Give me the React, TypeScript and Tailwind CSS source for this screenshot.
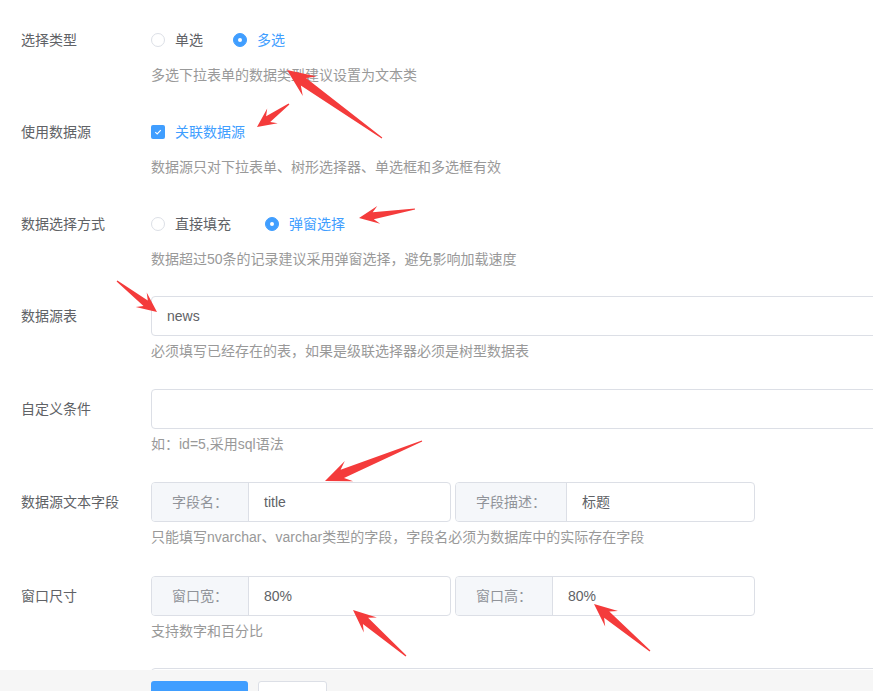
import React from "react";

const FONT = '"Liberation Sans", "Noto Sans CJK SC", sans-serif';

function Radio({ label, checked, className = "" }: { label: string; checked?: boolean; className?: string }) {
  return (
    <span className={`flex items-center ${className}`}>
      {checked ? (
        <span className="w-[14px] h-[14px] rounded-full bg-[#409eff] border border-[#409eff] flex items-center justify-center">
          <span className="w-[4px] h-[4px] rounded-full bg-white" />
        </span>
      ) : (
        <span className="w-[14px] h-[14px] rounded-full bg-white border border-[#dcdfe6]" />
      )}
      <span className={`ml-[10px] ${checked ? "text-[#409eff]" : "text-[#606266]"}`}>{label}</span>
    </span>
  );
}

function Checkbox({ label }: { label: string }) {
  return (
    <span className="flex items-center">
      <span className="w-[14px] h-[14px] rounded-[2px] bg-[#409eff] flex items-center justify-center">
        <svg width="10" height="10" viewBox="0 0 10 10">
          <path d="M2.3 5.1 L4.2 7 L7.8 3.2" fill="none" stroke="white" strokeWidth="1.1" />
        </svg>
      </span>
      <span className="ml-[10px] text-[#409eff]">{label}</span>
    </span>
  );
}

function TextInput({ value }: { value: string }) {
  return (
    <div className="w-[760px] h-[40px] border border-[#dcdfe6] rounded-[4px] bg-white flex items-center px-[15px] text-[#606266]">
      {value}
    </div>
  );
}

function Group({ prepend, value }: { prepend: string; value: string }) {
  return (
    <div className="w-[300px] h-[40px] flex border border-[#dcdfe6] rounded-[4px] overflow-hidden bg-white">
      <div className="h-full flex items-center px-[20px] bg-[#f5f7fa] border-r border-[#dcdfe6] text-[#909399]">
        {prepend}
      </div>
      <div className="flex-1 flex items-center px-[15px] text-[#606266]">{value}</div>
    </div>
  );
}

function Item({ label, help, children, mb }: { label: string; help?: string; children: React.ReactNode; mb: string }) {
  return (
    <div className={`flex ${mb}`}>
      <div className="w-[151px] shrink-0 pl-[21px] leading-[40px] text-[#606266]">{label}</div>
      <div className="flex flex-col">
        <div className="h-[40px] flex items-center">{children}</div>
        {help !== undefined && <div className="mt-[4px] leading-[22px] text-[#999999]">{help}</div>}
      </div>
    </div>
  );
}

function arrowPoints(x1: number, y1: number, x2: number, y2: number, headLen: number, headW: number, neckW: number) {
  const dx = x2 - x1;
  const dy = y2 - y1;
  const len = Math.sqrt(dx * dx + dy * dy);
  const ux = dx / len;
  const uy = dy / len;
  const px = -uy;
  const py = ux;
  const nx = x2 - ux * headLen * 0.72;
  const ny = y2 - uy * headLen * 0.72;
  const bx = x2 - ux * headLen;
  const by = y2 - uy * headLen;
  const pts = [
    [x1 + px * 0.6, y1 + py * 0.6],
    [nx + px * neckW, ny + py * neckW],
    [bx + px * headW, by + py * headW],
    [x2, y2],
    [bx - px * headW, by - py * headW],
    [nx - px * neckW, ny - py * neckW],
    [x1 - px * 0.6, y1 - py * 0.6],
  ];
  return pts.map((p) => `${p[0].toFixed(1)},${p[1].toFixed(1)}`).join(" ");
}

const arrows: [number, number, number, number, number, number, number][] = [
  [382, 138, 287, 70, 28, 12, 4.5],
  [289, 104, 257, 127, 19, 9, 3.5],
  [415, 209, 359, 218, 20, 9, 3.5],
  [117, 281, 157, 312, 20, 9, 3.5],
  [422, 441, 325, 481, 26, 11, 4.5],
  [406, 656, 353, 610, 23, 10, 4],
  [650, 651, 594, 604, 23, 10, 4],
];

export default function App() {
  return (
    <div
      className="relative w-[873px] h-[691px] overflow-hidden bg-white flex flex-col text-[14px]"
      style={{ fontFamily: FONT }}
    >
      <div className="h-[670px] shrink-0 overflow-hidden pt-[20px]">
        <Item label="选择类型" help="多选下拉表单的数据类型建议设置为文本类" mb="mb-[26px]">
          <Radio label="单选" className="mr-[30px]" />
          <Radio label="多选" checked />
        </Item>
        <Item label="使用数据源" help="数据源只对下拉表单、树形选择器、单选框和多选框有效" mb="mb-[26px]">
          <Checkbox label="关联数据源" />
        </Item>
        <Item label="数据选择方式" help="数据超过50条的记录建议采用弹窗选择，避免影响加载速度" mb="mb-[26px]">
          <Radio label="直接填充" className="mr-[34px]" />
          <Radio label="弹窗选择" checked />
        </Item>
        <Item label="数据源表" help="必须填写已经存在的表，如果是级联选择器必须是树型数据表" mb="mb-[27px]">
          <TextInput value="news" />
        </Item>
        <Item label="自定义条件" help="如：id=5,采用sql语法" mb="mb-[27px]">
          <TextInput value="" />
        </Item>
        <Item
          label="数据源文本字段"
          help="只能填写nvarchar、varchar类型的字段，字段名必须为数据库中的实际存在字段"
          mb="mb-[28px]"
        >
          <div className="flex gap-[4px]">
            <Group prepend="字段名：" value="title" />
            <Group prepend="字段描述：" value="标题" />
          </div>
        </Item>
        <Item label="窗口尺寸" help="支持数字和百分比" mb="mb-[26px]">
          <div className="flex gap-[4px]">
            <Group prepend="窗口宽：" value="80%" />
            <Group prepend="窗口高：" value="80%" />
          </div>
        </Item>
        <Item label="" mb="mb-[26px]">
          <TextInput value="" />
        </Item>
      </div>
      <div className="flex-1 bg-[#f6f6f6] pt-[11px] pl-[151px] flex gap-[10px] items-start">
        <div className="w-[97px] h-[40px] bg-[#409eff] rounded-[3px]" />
        <div className="w-[69px] h-[40px] bg-white border border-[#dcdfe6] rounded-[3px]" />
      </div>

      <svg className="absolute inset-0 pointer-events-none" width="873" height="691">
        {arrows.map((a, i) => (
          <polygon key={i} points={arrowPoints(a[0], a[1], a[2], a[3], a[4], a[5], a[6])} fill="#f43b3b" />
        ))}
      </svg>
    </div>
  );
}
